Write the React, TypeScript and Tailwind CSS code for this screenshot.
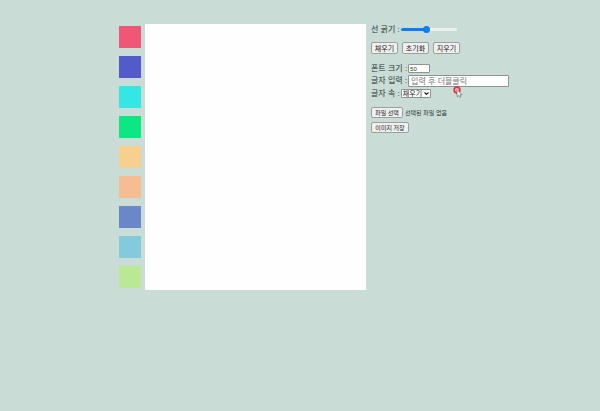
import { useState } from "react";

const colors = [
  { name: "빨강", fill: "bg-[#ee5775]" },
  { name: "파랑", fill: "bg-[#535bcb]" },
  { name: "하늘", fill: "bg-[#34e7e4]" },
  { name: "초록", fill: "bg-[#0be881]" },
  { name: "노랑", fill: "bg-[#f8d08e]" },
  { name: "살구", fill: "bg-[#f6bd90]" },
  { name: "남색", fill: "bg-[#6987c9]" },
  { name: "물빛", fill: "bg-[#83cadc]" },
  { name: "연두", fill: "bg-[#b9e994]" },
];

const button =
  "flex items-center justify-center rounded-[2px] border border-[#9aa09e] bg-[#efefef] leading-none text-[#222]";

function Pointer() {
  return (
    <svg
      className="pointer-events-none absolute top-[62px] left-[82px] h-3 w-2.5"
      viewBox="0 0 10 12"
      aria-hidden="true"
    >
      <circle cx="4" cy="4" r="2.9" fill="#f3b5b5" stroke="#e0323c" strokeWidth="1.6" />
      <path d="M4 3.6v7l1.6-1.4 1 2.3 1.3-.6-1-2.2h2.2z" fill="#fff" stroke="#555" strokeWidth=".6" />
    </svg>
  );
}

export default function App() {
  const [width, setWidth] = useState(45);
  return (
    <main className="flex min-h-screen items-start bg-[#c9ddd6] pt-6 pl-[119px] font-['Liberation_Sans','Noto_Sans_CJK_KR',sans-serif] text-[8px] leading-none text-[#2c3432]">
      <div className="mt-0.5 flex shrink-0 flex-col gap-2">
        {colors.map((c) => (
          <button key={c.name} type="button" aria-label={c.name} className={`size-[22px] ${c.fill}`} />
        ))}
      </div>
      <canvas className="ml-1 h-[266px] w-[221px] shrink-0 bg-[#fffeff]" />
      <section className="relative ml-[5px] flex flex-col items-start">
        <div className="flex h-[11px] items-center gap-px">
          <label htmlFor="line">선 굵기 :</label>
          <input
            id="line"
            type="range"
            value={width}
            onChange={(e) => setWidth(Number(e.target.value))}
            style={{ backgroundImage: `linear-gradient(to right, #0b7bff ${width}%, #edf0ee ${width}%)` }}
            className="h-[3px] w-14 appearance-none rounded-full [&::-webkit-slider-thumb]:size-[7px] [&::-webkit-slider-thumb]:appearance-none [&::-webkit-slider-thumb]:rounded-full [&::-webkit-slider-thumb]:bg-[#0b7bff]"
          />
        </div>
        <div className="mt-[7px] flex gap-1 text-[7px]">
          <button type="button" className={`${button} h-3 w-[27px]`}>채우기</button>
          <button type="button" className={`${button} h-3 w-[27px]`}>초기화</button>
          <button type="button" className={`${button} h-3 w-[27px]`}>지우기</button>
        </div>
        <div className="mt-2.5 flex h-[9px] items-center gap-px">
          <label htmlFor="size">폰트 크기 :</label>
          <input
            id="size"
            defaultValue="50"
            className="h-[9px] w-[22px] rounded-[1px] border border-[#8c9391] bg-white px-px text-[6px] leading-none"
          />
        </div>
        <div className="mt-0.5 flex h-3 items-center gap-px">
          <label htmlFor="text">글자 입력 :</label>
          <input
            id="text"
            placeholder="입력 후 더블클릭"
            className="h-3 w-[101px] rounded-[1px] border border-[#8c9391] bg-white px-0.5 leading-none placeholder:text-[#757575]"
          />
        </div>
        <div className="mt-0.5 flex h-[9px] items-center gap-px">
          <label htmlFor="inside">글자 속 :</label>
          <div className="relative flex">
            <select
              id="inside"
              className="h-[9px] w-[30px] appearance-none rounded-[1px] border border-[#8c9391] bg-white pl-px text-[7px] leading-none text-[#222]"
            >
              <option>채우기</option>
              <option>테두리</option>
            </select>
            <svg
              className="pointer-events-none absolute top-[3px] right-0.5 h-[3px] w-[5px]"
              viewBox="0 0 5 3"
              aria-hidden="true"
            >
              <path d="M.5.5l2 1.8 2-1.8" fill="none" stroke="#111" strokeWidth="1.1" />
            </svg>
          </div>
        </div>
        <label className="mt-[9px] flex items-center gap-0.5 text-[6px]">
          <input type="file" className="sr-only" />
          <span className={`${button} h-[11px] w-8`}>파일 선택</span>
          <span>선택된 파일 없음</span>
        </label>
        <button type="button" className={`${button} mt-1 h-[11px] w-[38px] text-[6px]`}>이미지 저장</button>
        <Pointer />
      </section>
    </main>
  );
}
